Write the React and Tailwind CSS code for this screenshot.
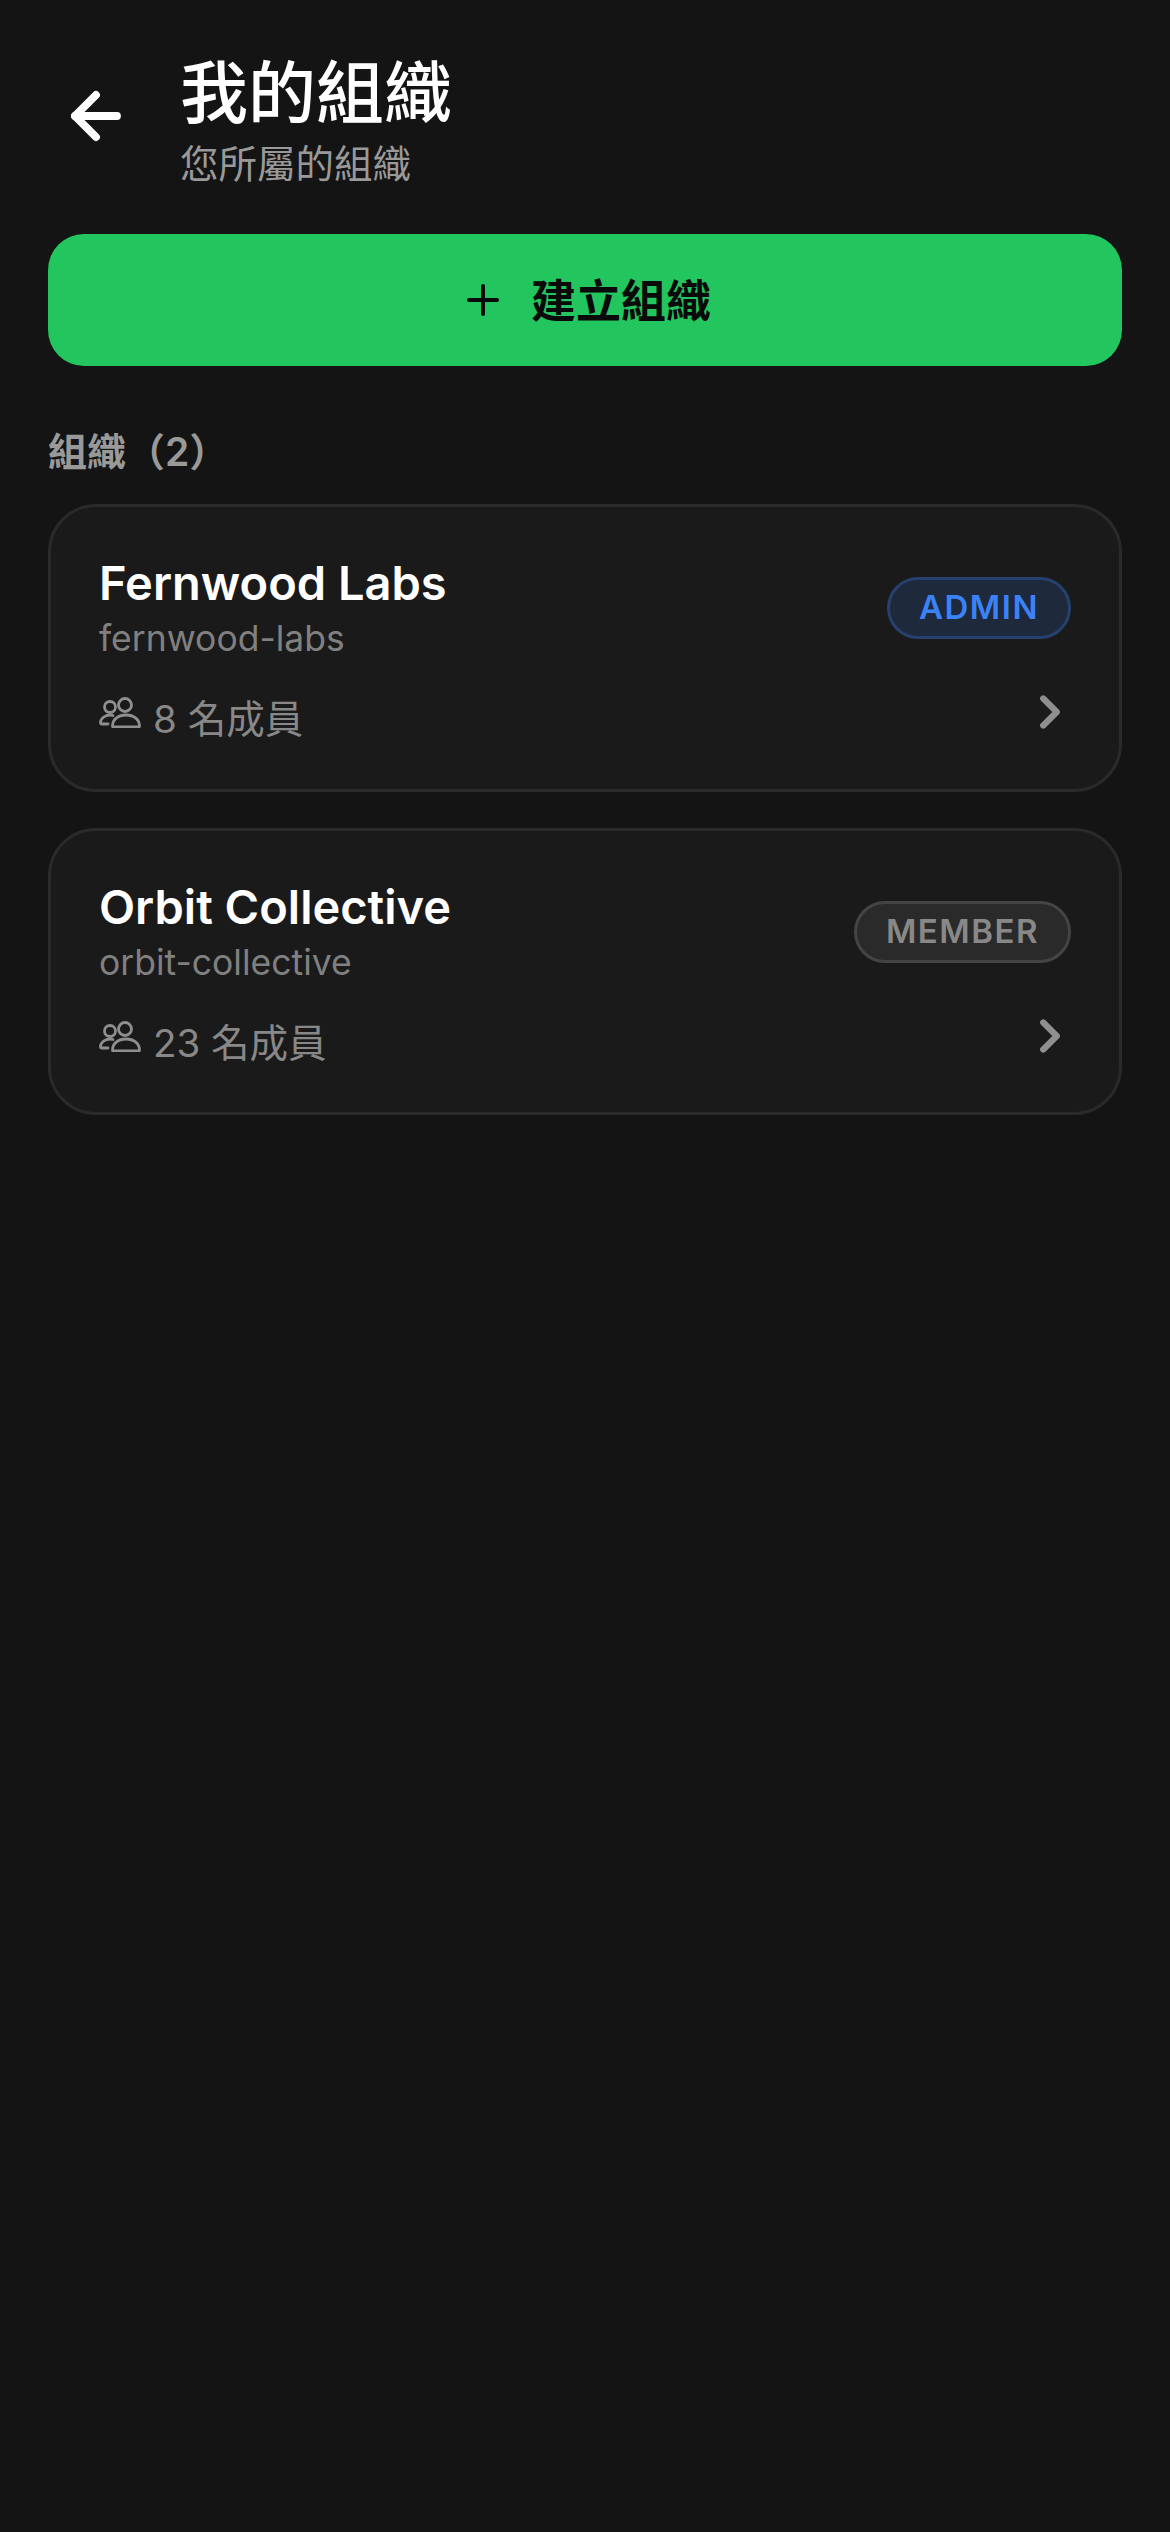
import { ArrowLeft, ChevronRight, Plus } from 'lucide-react'

const orgs = [
  { name: 'Fernwood Labs', slug: 'fernwood-labs', members: 8, role: 'ADMIN' },
  { name: 'Orbit Collective', slug: 'orbit-collective', members: 23, role: 'MEMBER' },
]

function PeopleIcon() {
  return (
    <svg viewBox="0 0 42 32" fill="none" stroke="#8f8f8f" strokeWidth="2.8" className="w-[42px] h-[32px] shrink-0">
      <circle cx="11" cy="11" r="5.500" />
      <circle cx="26" cy="9" r="6.500" />
      <path d="M13.500 30c0-6.500 5.500-11 13.500-11s13.500 4.500 13.500 11c0 .6-.4 1-1 1H14.500c-.6 0-1-.4-1-1Z" strokeLinejoin="round" />
      <path d="M14 19.500c-1-.3-2-.5-3-.5-5 0-9.500 3.500-9.500 7.500 0 1 .5 1.500 1.500 1.500H9" strokeLinecap="round" strokeLinejoin="round" />
    </svg>
  )
}

function OrgCard({ org }) {
  const isAdmin = org.role === 'ADMIN'
  return (
    <div className="rounded-[48px] border-[3px] border-[#2a2a2a] bg-[#1a1a1a] px-[48px] pt-[49px] pb-[45.500px]">
      <div className="flex items-center justify-between">
        <div>
          <div className="text-[47px] leading-[54px] font-semibold text-white">{org.name}</div>
          <div className="text-[35.500px] leading-[48px] text-[#808080] mt-[5px]">{org.slug}</div>
        </div>
        <span
          className={
            isAdmin
              ? 'rounded-full border-[3px] border-[#26406f] bg-[#1e293b] px-[29px] h-[62px] mb-[3px] flex items-center text-[33px] font-semibold tracking-[1.5px] text-[#3b82f6]'
              : 'rounded-full border-[3px] border-[#444444] bg-[#2a2a2a] px-[29px] h-[62px] mb-[3px] flex items-center text-[33px] font-semibold tracking-[1.5px] text-[#888888]'
          }
        >
          {org.role}
        </span>
      </div>
      <div className="flex items-center justify-between mt-[18px]">
        <div className="flex items-center gap-[12px] text-[38.500px] leading-[48px] text-[#888888]">
          <PeopleIcon />
          <span className="pt-[14px]">{org.members} 名成員</span>
        </div>
        <ChevronRight className="w-[54px] h-[54px] text-[#8f8f8f] mr-[-6px]" strokeWidth={2.8} />
      </div>
    </div>
  )
}

export default function App() {
  return (
    <div className="min-h-[2532px] bg-[#141414] font-['Inter','Noto_Sans_CJK_TC',sans-serif]" lang="zh-TW">
      <div className="flex items-center pl-[60px] pr-[48px] pt-[48px]">
        <ArrowLeft className="w-[72px] h-[72px] text-white mr-[48px] mb-[3px] shrink-0" strokeWidth={2.6} />
        <div>
          <h1 className="text-[68px] leading-[90px] font-medium text-white">我的組織</h1>
          <p className="text-[38.500px] leading-[48px] mt-[1.5px] text-[#999999]">您所屬的組織</p>
        </div>
      </div>

      <div className="px-[48px] mt-[46.500px]">
        <button className="w-full h-[132px] rounded-[36px] bg-[#22c55e] flex items-center justify-center gap-[24px] text-[45px] font-bold text-[#0a0a0a]">
          <Plus className="w-[48px] h-[48px]" strokeWidth={2} />
          <span className="pt-[4px]">建立組織</span>
        </button>

        <div className="mt-[62px] mb-[28px] text-[39px] leading-[48px] font-semibold text-[#999999]">組織（2）</div>

        <div className="flex flex-col gap-[36px]">
          {orgs.map((org) => (
            <OrgCard key={org.slug} org={org} />
          ))}
        </div>
      </div>
    </div>
  )
}
